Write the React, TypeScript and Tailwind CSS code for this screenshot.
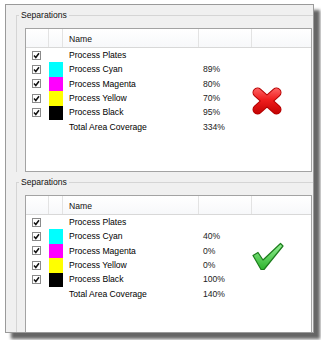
import React from "react";

type Row = { name: string; color?: string; pct: string; check: boolean };

const panel1: Row[] = [
  { name: "Process Plates", pct: "", check: true },
  { name: "Process Cyan", color: "#00ffff", pct: "89%", check: true },
  { name: "Process Magenta", color: "#ff00ff", pct: "80%", check: true },
  { name: "Process Yellow", color: "#ffff00", pct: "70%", check: true },
  { name: "Process Black", color: "#000000", pct: "95%", check: true },
  { name: "Total Area Coverage", pct: "334%", check: false },
];

const panel2: Row[] = [
  { name: "Process Plates", pct: "", check: true },
  { name: "Process Cyan", color: "#00ffff", pct: "40%", check: true },
  { name: "Process Magenta", color: "#ff00ff", pct: "0%", check: true },
  { name: "Process Yellow", color: "#ffff00", pct: "0%", check: true },
  { name: "Process Black", color: "#000000", pct: "100%", check: true },
  { name: "Total Area Coverage", pct: "140%", check: false },
];

function CheckBox() {
  return (
    <svg width="9" height="9" viewBox="0 0 9 9">
      <rect x="0.5" y="0.5" width="8" height="8" fill="#fff" stroke="#8a8a8a" />
      <path d="M2 4.5 L3.8 6.5 L7 2.3" fill="none" stroke="#111" strokeWidth="1.5" />
    </svg>
  );
}

function RedX() {
  return (
    <svg width="30" height="28" viewBox="0 0 30 28">
      <defs>
        <linearGradient id="rx" gradientUnits="userSpaceOnUse" x1="0" y1="0" x2="0" y2="28">
          <stop offset="0" stopColor="#ff6a6a" />
          <stop offset="0.45" stopColor="#f01e1e" />
          <stop offset="1" stopColor="#c00000" />
        </linearGradient>
      </defs>
      <g strokeLinecap="round">
        <line x1="5.5" y1="5.5" x2="24.5" y2="22.5" stroke="#b30000" strokeWidth="10" />
        <line x1="24.5" y1="5.5" x2="5.5" y2="22.5" stroke="#b30000" strokeWidth="10" />
        <line x1="5.5" y1="5.5" x2="24.5" y2="22.5" stroke="url(#rx)" strokeWidth="8" />
        <line x1="24.5" y1="5.5" x2="5.5" y2="22.5" stroke="url(#rx)" strokeWidth="8" />
      </g>
    </svg>
  );
}

function GreenCheck() {
  return (
    <svg width="32" height="29" viewBox="0 0 32 29">
      <defs>
        <linearGradient id="gc" x1="0" y1="0" x2="0" y2="1">
          <stop offset="0" stopColor="#95f295" />
          <stop offset="1" stopColor="#2db32d" />
        </linearGradient>
      </defs>
      <path
        d="M1 13.5 L6 10.5 L11 18 L28.5 1.5 L31 4 L12 27.5 L9 27.5 Z"
        fill="url(#gc)"
        stroke="#1c7c1c"
        strokeWidth="1.2"
        strokeLinejoin="round"
      />
    </svg>
  );
}

function Panel({ rows, icon }: { rows: Row[]; icon: "x" | "check" }) {
  return (
    <div className="h-[167px] overflow-hidden pt-[4px]">
      <fieldset className="ml-[10px] w-[298px] h-[180px] border border-[#d5d5d5]">
        <legend className="ml-[2px] px-[2px] text-[8.6px] leading-[12px] text-[#111]">Separations</legend>
        <div className="relative ml-[8px] mt-[7px] w-[287px] h-[144px] border border-[#a3a3a3] bg-white">
          <div className="flex h-[19px] border-b border-[#d8d8d8] bg-gradient-to-b from-white to-[#f7f8fa]">
            <div className="w-[23px] border-r border-[#e3e3e3]" />
            <div className="w-[14px] border-r border-[#e3e3e3]" />
            <div className="w-[136px] border-r border-[#e3e3e3] pl-[6px] pt-[6px] text-[#111]">Name</div>
            <div className="w-[53px] border-r border-[#e3e3e3]" />
            <div className="flex-1" />
          </div>
          {rows.map((r) => (
            <div key={r.name} className="flex h-[14.4px] items-center">
              <div className="flex w-[23px] items-center pl-[6px]">{r.check ? <CheckBox /> : null}</div>
              <div className="h-full w-[14px]" style={r.color ? { backgroundColor: r.color } : undefined} />
              <div className="w-[136px] pl-[6px] text-[#000]">{r.name}</div>
              <div className="w-[53px] pl-[4px] text-[#222]">{r.pct}</div>
            </div>
          ))}
          <div className={icon === "x" ? "absolute left-[226px] top-[58px]" : "absolute left-[226px] top-[46px]"}>
            {icon === "x" ? <RedX /> : <GreenCheck />}
          </div>
        </div>
      </fieldset>
    </div>
  );
}

export default function App() {
  return (
    <div className="h-[340px] w-[321px] bg-white pl-[5px] pt-[4px] font-['Liberation_Sans',Arial,sans-serif] text-[8.6px] leading-none">
      <div className="h-[329px] w-[309px] overflow-hidden border border-[#9a9a9a] bg-[#f0f0f0] shadow-[6px_6px_3px_rgba(0,0,0,0.6)]">
        <Panel rows={panel1} icon="x" />
        <Panel rows={panel2} icon="check" />
      </div>
    </div>
  );
}
